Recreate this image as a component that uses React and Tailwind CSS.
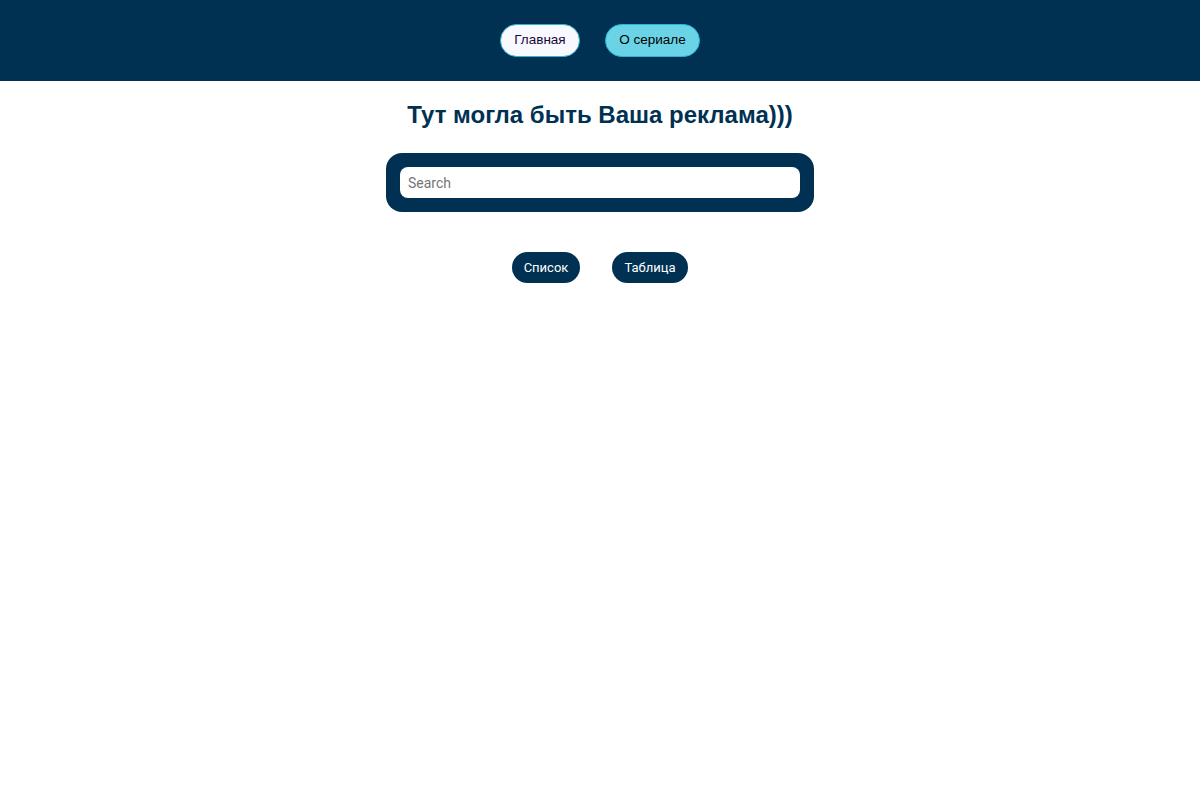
export default function App() {
  return (
    <div className="min-h-screen bg-white" style={{ fontFamily: '"Liberation Sans", Arial, sans-serif' }}>
      <header className="h-[81px] bg-[#003153] flex items-center justify-center gap-[25px]">
        <button className="h-[33px] w-[80px] rounded-full bg-[#f8f8ff] border border-[#2bb5d4] text-[13.5px] text-[#1a0a3a]">
          Главная
        </button>
        <button className="h-[33px] w-[95px] rounded-full bg-[#6ad3e5] border border-[#2bb5d4] text-[13.5px] text-black">
          О сериале
        </button>
      </header>
      <main className="flex flex-col items-center">
        <h1 className="mt-[20px] text-[24px] leading-[28px] font-bold text-[#003153]">
          Тут могла быть Ваша реклама)))
        </h1>
        <div className="mt-[24px] w-[428px] h-[59px] rounded-[16px] bg-[#003153] flex items-center justify-center">
          <input
            placeholder="Search"
            className="w-[400px] h-[31px] rounded-[8px] bg-white px-[8px] text-[14px] text-black placeholder:text-[#757575] outline-none"
            style={{ fontFamily: 'Roboto, sans-serif' }}
          />
        </div>
        <div className="mt-[40px] flex gap-[32px]" style={{ fontFamily: 'Roboto, sans-serif' }}>
          <button className="h-[31px] w-[68px] rounded-full bg-[#003153] text-white text-[13px]">Список</button>
          <button className="h-[31px] w-[76px] rounded-full bg-[#003153] text-white text-[13px]">Таблица</button>
        </div>
      </main>
    </div>
  );
}
